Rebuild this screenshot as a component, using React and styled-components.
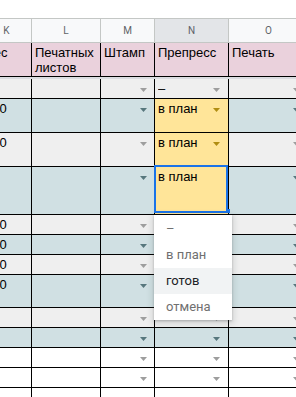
import React from 'react';
import styled, { createGlobalStyle } from 'styled-components';

const GlobalStyle = createGlobalStyle`
  html, body { margin: 0; padding: 0; background: #fff; }
  body { width: 296px; height: 397px; overflow: hidden; }
  * { box-sizing: border-box; }
`;

const COLS = '50px 69px 54px 74px 80px';

const TONES = {
  gray: '#efefef',
  blue: '#d0e0e3',
  white: '#ffffff',
  yellow: '#ffe599',
};

const ARROW = {
  gray: '#9e9e9e',
  blue: '#57777d',
  white: '#9e9e9e',
  yellow: '#b08d12',
};

const Page = styled.div`
  position: relative;
  width: 296px;
  height: 397px;
  overflow: hidden;
  background: #fff;
  font-family: "Liberation Sans", Arial, sans-serif;
`;

const TopSpace = styled.div`
  height: 19px;
  border-bottom: 1px solid #c4c7c5;
`;

const Sheet = styled.div`
  margin-left: -18px;
  width: 327px;
  display: flex;
  flex-direction: column;
`;

const Row = styled.div`
  display: grid;
  grid-template-columns: ${COLS};
  height: ${(p) => p.$h}px;
`;

const LetterCell = styled.div`
  display: flex;
  align-items: center;
  justify-content: center;
  background: ${(p) => (p.$active ? '#e3e5e8' : '#f8f9fa')};
  border-right: 1px solid #c4c7c5;
  border-bottom: 1px solid #c4c7c5;
  font-family: Roboto, "Liberation Sans", sans-serif;
  font-size: 10px;
  color: #5f6368;
`;

const HeadCell = styled.div`
  background: #ead1dc;
  border-right: 1px solid #000;
  border-bottom: 1px solid #000;
  padding: 2px 3px 0;
  font-size: 13px;
  line-height: 15px;
  color: #000;
  overflow: hidden;
  white-space: ${(p) => (p.$wrap ? 'normal' : 'nowrap')};
`;

const FrozenBar = styled.div`
  height: 2px;
  background: #dadce0;
`;

const Cell = styled.div`
  position: relative;
  display: flex;
  align-items: flex-start;
  background: ${(p) => TONES[p.$tone]};
  border-right: 1px solid #000;
  border-bottom: 1px solid #000;
  padding: 2px ${(p) => p.$pr || 7}px 0 3px;
  font-size: 13px;
  line-height: 15px;
  color: #000;
  white-space: nowrap;
`;

const CellText = styled.span`
  flex: 1;
  overflow: hidden;
`;

const ArrowBox = styled.svg`
  flex: none;
  margin-top: 7px;
`;

const Arrow = ({ tone }) => (
  <ArrowBox width="7" height="4" viewBox="0 0 7 4">
    <path d="M0 0h7L3.5 4z" fill={ARROW[tone]} />
  </ArrowBox>
);

const Selection = styled.div`
  position: absolute;
  top: -2px;
  left: -1px;
  right: 0;
  bottom: 1px;
  border: 2px solid #1a73e8;
  pointer-events: none;
  z-index: 2;
`;

const Handle = styled.div`
  position: absolute;
  right: -4px;
  bottom: -2px;
  width: 4px;
  height: 4px;
  background: #1a73e8;
`;

const Menu = styled.div`
  position: absolute;
  left: 154px;
  top: 215px;
  width: 78px;
  padding: 1px 0 0;
  background: #fff;
  box-shadow: 0 1px 2px rgba(60, 64, 67, 0.3), 0 2px 6px 2px rgba(60, 64, 67, 0.15);
  z-index: 5;
  font-family: Roboto, "Liberation Sans", sans-serif;
  font-size: 13px;
`;

const MenuItem = styled.div`
  height: 26px;
  line-height: 26px;
  padding-left: 12px;
  color: ${(p) => (p.$hover ? '#202124' : '#707070')};
  background: ${(p) => (p.$hover ? '#f1f3f4' : 'transparent')};
`;

const rows = [
  { h: 20, tone: 'gray', k: '', n: { text: '–' } },
  { h: 34, tone: 'blue', k: '100', n: { text: 'в план', yellow: true } },
  { h: 34, tone: 'gray', k: '100', n: { text: 'в план', yellow: true } },
  { h: 48, tone: 'blue', k: '', n: { text: 'в план', yellow: true, selected: true } },
  { h: 20, tone: 'gray', k: '100', n: { text: '' } },
  { h: 20, tone: 'blue', k: '100', n: { text: '' } },
  { h: 20, tone: 'gray', k: '100', n: { text: '' } },
  { h: 33, tone: 'blue', k: '100', n: { text: '' } },
  { h: 20, tone: 'gray', k: '', n: { text: '' } },
  { h: 20, tone: 'blue', k: '', n: { text: '' } },
  { h: 20, tone: 'white', k: '', n: { text: '' } },
  { h: 20, tone: 'white', k: '', n: { text: '' } },
  { h: 20, tone: 'white', k: '', n: { text: '' } },
];

const letters = ['K', 'L', 'M', 'N', 'O'];

export default function App() {
  return (
    <Page>
      <GlobalStyle />
      <TopSpace />
      <Sheet>
        <Row $h={24}>
          {letters.map((l) => (
            <LetterCell key={l} $active={l === 'N'}>
              {l}
            </LetterCell>
          ))}
        </Row>
        <Row $h={34}>
          <HeadCell>Вес</HeadCell>
          <HeadCell $wrap>Печатных листов</HeadCell>
          <HeadCell>Штамп</HeadCell>
          <HeadCell>Препресс</HeadCell>
          <HeadCell>Печать</HeadCell>
        </Row>
        <FrozenBar />
        {rows.map((r, i) => {
          const nTone = r.n.yellow ? 'yellow' : r.tone;
          return (
            <Row key={i} $h={r.h}>
              <Cell $tone={r.tone}>
                <CellText>{r.k}</CellText>
              </Cell>
              <Cell $tone={r.tone} />
              <Cell $tone={r.tone} $pr={7}>
                <CellText />
                <Arrow tone={r.tone} />
              </Cell>
              <Cell $tone={nTone} $pr={8}>
                <CellText>{r.n.text}</CellText>
                {!r.n.selected && <Arrow tone={nTone} />}
                {r.n.selected && (
                  <Selection>
                    <Handle />
                  </Selection>
                )}
              </Cell>
              <Cell $tone={r.tone} $pr={8}>
                <CellText />
                <Arrow tone={r.tone} />
              </Cell>
            </Row>
          );
        })}
      </Sheet>
      <Menu>
        <MenuItem>–</MenuItem>
        <MenuItem>в план</MenuItem>
        <MenuItem $hover>готов</MenuItem>
        <MenuItem>отмена</MenuItem>
      </Menu>
    </Page>
  );
}
